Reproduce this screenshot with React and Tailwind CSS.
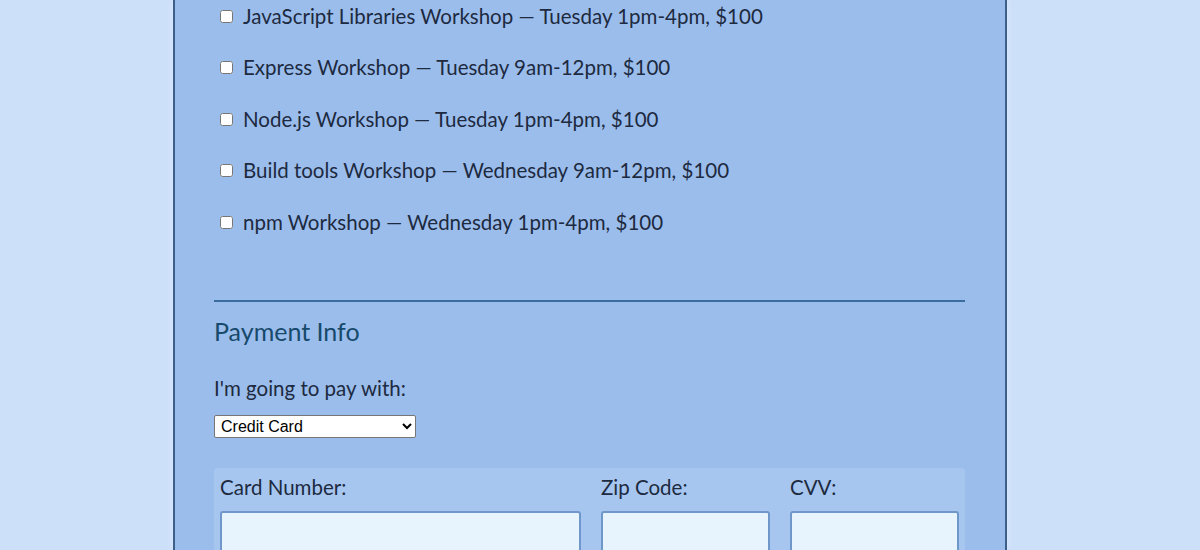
export default function App() {
  const workshops = [
    "JavaScript Libraries Workshop — Tuesday 1pm-4pm, $100",
    "Express Workshop — Tuesday 9am-12pm, $100",
    "Node.js Workshop — Tuesday 1pm-4pm, $100",
    "Build tools Workshop — Wednesday 9am-12pm, $100",
    "npm Workshop — Wednesday 1pm-4pm, $100",
  ];
  return (
    <div className="w-[1200px] h-[550px] overflow-hidden bg-[#cde0fa] flex" style={{ fontFamily: "Lato, 'Noto Sans', sans-serif" }}>
      <div className="ml-[173px] w-[834px] h-full bg-[#9bbdec] border-x-2 border-[#3d5f8c] shadow-[0_0_6px_rgba(255,255,255,0.4)] pl-[39px] pr-[40px] text-[#1d2a3f] text-[20.5px]">
        <div className="flex flex-col gap-[29.5px] pt-[5px]">
          {workshops.map((w) => (
            <label key={w} className="flex items-center h-[22px]">
              <input type="checkbox" className="ml-[6px] mr-[10px] w-[13px] h-[13px]" />
              <span>{w}</span>
            </label>
          ))}
        </div>
        <div className="mt-[67px] h-[2px] bg-[#3b6c9e]" />
        <h2 className="mt-[13px] text-[25px] leading-[32px] text-[#174a6b]">Payment Info</h2>
        <div className="mt-[29px] leading-[24px]">I'm going to pay with:</div>
        <select className="mt-[15px] w-[202px] h-[23px] bg-white border border-[#767676] text-[16px] text-black rounded-[2px] pl-[2px]" style={{ fontFamily: "'Liberation Sans', Arial, sans-serif" }}>
          <option>Credit Card</option>
        </select>
        <div className="mt-[28px] bg-[#a6c6f0] rounded-[4px] px-[6px] pt-[8px] pb-[10px] flex gap-[20px]">
          <div className="w-[361px] flex flex-col">
            <span className="leading-[22px]">Card Number:</span>
            <div className="mt-[13px] h-[45px] bg-[#e8f4fd] border-2 border-[#6f97c9] rounded-[3px]" />
          </div>
          <div className="w-[169px] flex flex-col">
            <span className="leading-[22px]">Zip Code:</span>
            <div className="mt-[13px] h-[45px] bg-[#e8f4fd] border-2 border-[#6f97c9] rounded-[3px]" />
          </div>
          <div className="w-[169px] flex flex-col">
            <span className="leading-[22px]">CVV:</span>
            <div className="mt-[13px] h-[45px] bg-[#e8f4fd] border-2 border-[#6f97c9] rounded-[3px]" />
          </div>
        </div>
      </div>
    </div>
  );
}
